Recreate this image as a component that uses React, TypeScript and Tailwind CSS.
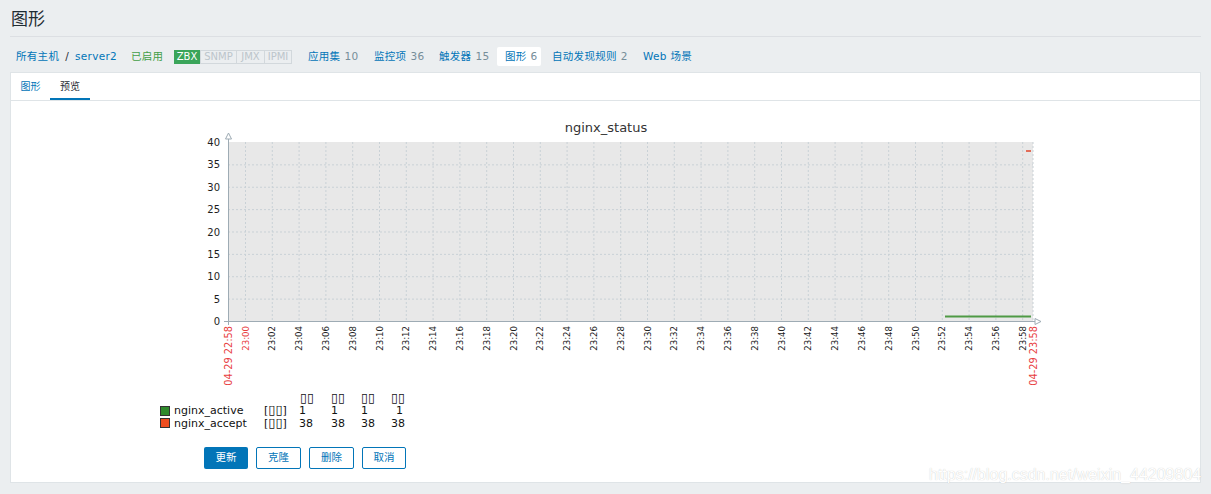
const FONT = "font-['DejaVu_Sans','Noto_Sans_CJK_SC',sans-serif]";

const ticks = Array.from({ length: 30 }, (_, i) => i);
const yVals = [5, 10, 15, 20, 25, 30, 35];
const yPos = (v: number) => 213 - v * 4.475;
const gx = (i: number) => 95 + i * 26.8;

const Chart = () => (
  <svg width="900" height="330" viewBox="0 0 900 330" fontFamily="'DejaVu Sans', sans-serif">
    {/* title */}
    <text x="456" y="24" fontSize="13" fill="#333" textAnchor="middle">
      nginx_status
    </text>

    {/* plot area */}
    <rect x="78" y="34" width="805" height="179" fill="#e8e8e8" />
    {yVals.map((v) => (
      <line key={v} x1="78" x2="883" y1={yPos(v) + 0.5} y2={yPos(v) + 0.5} stroke="#c9d1d6" strokeDasharray="2,2" />
    ))}
    {ticks.map((i) => (
      <line key={i} x1={gx(i) + 0.5} x2={gx(i) + 0.5} y1="34" y2="213" stroke="#c9d1d6" strokeDasharray="2,2" />
    ))}
    <line x1="883" x2="883" y1="34" y2="213" stroke="#c9d1d6" strokeDasharray="2,2" />

    {/* data */}
    <line x1="795" x2="881" y1="208.5" y2="208.5" stroke="#4f9a45" strokeWidth="2" />
    <line x1="876" x2="881" y1="43" y2="43" stroke="#e0452a" strokeWidth="1.5" />

    {/* axes */}
    <line x1="78.5" x2="78.5" y1="30" y2="217" stroke="#9eabb4" />
    <polygon points="75.5,31 78.5,25 81.5,31" fill="#fff" stroke="#9eabb4" />
    <line x1="74" x2="886" y1="213.5" y2="213.5" stroke="#9eabb4" />
    <polygon points="885,210.5 891,213.5 885,216.5" fill="#fff" stroke="#9eabb4" />

    {/* y labels */}
    {[0, 5, 10, 15, 20, 25, 30, 35, 40].map((v) => (
      <text key={v} x="70" y={yPos(v) + 4} fontSize="10" fill="#1e1e1e" textAnchor="end">
        {v}
      </text>
    ))}

    {/* x labels */}
    <text transform="translate(82,218) rotate(-90)" fontSize="9.8" fill="#e8403f" textAnchor="end">
      04-29 22:58
    </text>
    {ticks.map((i) => (
      <text
        key={i}
        transform={`translate(${gx(i) + 3.5},218) rotate(-90)`}
        fontSize="8.6"
        fill={i === 0 ? "#e8403f" : "#222"}
        textAnchor="end"
      >
        {`23:${String(i * 2).padStart(2, "0")}`}
      </text>
    ))}
    <text transform="translate(887,218) rotate(-90)" fontSize="9.8" fill="#e8403f" textAnchor="end">
      04-29 23:58
    </text>

    {/* legend */}
    {[150, 181, 211, 241].map((x) => (
      <text key={x} x={x} y="294" fontSize="12.5" fill="#111">
        ▯▯
      </text>
    ))}
    <rect x="10.5" y="298.5" width="9" height="9" fill="#2f8a2c" stroke="#333" />
    <rect x="10.5" y="310.5" width="9" height="9" fill="#ee4d1f" stroke="#333" />
    <text x="24" y="306" fontSize="11" fill="#111">nginx_active</text>
    <text x="24" y="319" fontSize="11" fill="#111">nginx_accept</text>
    <text x="114" y="306" fontSize="11" fill="#111">
      [<tspan fontSize="13">▯▯</tspan>]
    </text>
    <text x="114" y="319" fontSize="11" fill="#111">
      [<tspan fontSize="13">▯▯</tspan>]
    </text>
    {[156, 188, 218, 253].map((x) => (
      <text key={x} x={x} y="306" fontSize="11" fill="#111" textAnchor="end">
        1
      </text>
    ))}
    {[149, 181, 211, 241].map((x) => (
      <text key={x} x={x} y="319" fontSize="11" fill="#111">
        38
      </text>
    ))}
  </svg>
);

const NavLink = ({ label, count, w }: { label: string; count?: string; w: string }) => (
  <span className={`${w} shrink-0 text-[#0275b8]`}>
    {label}
    {count && <span className="ml-[4px] text-[#768d99]">{count}</span>}
  </span>
);

export default function App() {
  return (
    <div className={`relative w-[1211px] h-[494px] overflow-hidden bg-[#ebeef0] px-[10px] ${FONT}`}>
      {/* header */}
      <div className="h-[37px] border-b border-[#dcdfe3] pl-[1px] pt-[7px]">
        <h1 className="text-[17px] leading-[24px] text-[#1f2c33]">图形</h1>
      </div>

      {/* host navigation */}
      <div className="mt-[10px] mb-[6px] flex h-[19px] items-center pl-[6px] text-[10.5px] tracking-[0.3px]">
        <span className="w-[115px] shrink-0 text-[#0275b8]">
          所有主机<span className="mx-[6px] text-[#1f2c33]">/</span>server2
        </span>
        <span className="w-[43px] shrink-0 text-[#429e47]">已启用</span>
        <span className="flex w-[134px] shrink-0 items-center text-[10px] tracking-normal">
          <span className="flex h-[14px] w-[26px] items-center justify-center bg-[#3aa55a] text-white">ZBX</span>
          <span className="flex h-[14px] w-[37px] items-center justify-center border border-[#d2d8dc] text-[#bcc5cb]">SNMP</span>
          <span className="flex h-[14px] w-[28px] items-center justify-center border border-l-0 border-[#d2d8dc] text-[#bcc5cb]">JMX</span>
          <span className="flex h-[14px] w-[27px] items-center justify-center border border-l-0 border-[#d2d8dc] text-[#bcc5cb]">IPMI</span>
        </span>
        <NavLink label="应用集" count="10" w="w-[66px]" />
        <NavLink label="监控项" count="36" w="w-[65px]" />
        <NavLink label="触发器" count="15" w="w-[58px]" />
        <span className="flex h-[19px] w-[44px] shrink-0 items-center rounded-[2px] bg-white pl-[8px] text-[#0275b8]">
          图形<span className="ml-[4px] text-[#768d99]">6</span>
        </span>
        <span className="w-[11px] shrink-0" />
        <NavLink label="自动发现规则" count="2" w="w-[91px]" />
        <span className="shrink-0 text-[#0275b8]">Web 场景</span>
      </div>

      {/* panel */}
      <div className="h-[411px] border border-[#dfe4e7] bg-white">
        <div className="flex h-[28px] border-b border-[#dfe4e7] text-[10px]">
          <div className="flex w-[39px] items-center justify-center text-[#0275b8]">图形</div>
          <div className="flex w-[40px] items-center justify-center border-b-[2px] border-[#0275b8] pt-[2px] text-[#1f2c33]">
            预览
          </div>
        </div>

        <div className="pl-[139px] pt-[7px]">
          <Chart />
        </div>

        <div className="mt-[9px] flex gap-[8px] pl-[193px] text-[10.5px]">
          <button className="h-[22px] w-[44px] rounded-[2px] bg-[#0275b8] text-white">更新</button>
          <button className="h-[22px] w-[45px] rounded-[2px] border border-[#0275b8] bg-white text-[#0275b8]">克隆</button>
          <button className="h-[22px] w-[45px] rounded-[2px] border border-[#0275b8] bg-white text-[#0275b8]">删除</button>
          <button className="h-[22px] w-[44px] rounded-[2px] border border-[#0275b8] bg-white text-[#0275b8]">取消</button>
        </div>
      </div>

      {/* watermark */}
      <div className="absolute left-[929px] top-[463px] font-['Liberation_Sans',sans-serif] text-[16px] text-white [text-shadow:0_0_1px_rgba(0,0,0,0.25)]">
        https://blog.csdn.net/weixin_44209804
      </div>
    </div>
  );
}
